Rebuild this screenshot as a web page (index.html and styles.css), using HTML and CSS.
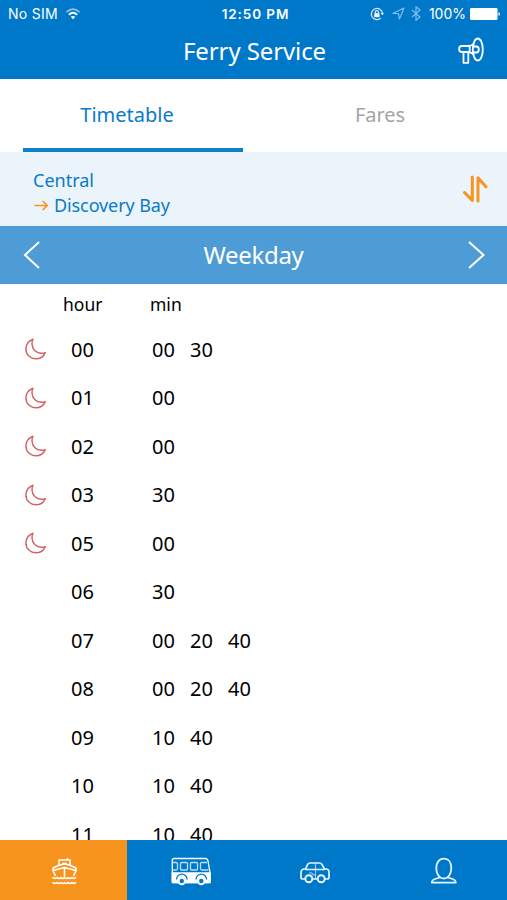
FILE: index.html
```html
<!DOCTYPE html>
<html lang="en">
<head>
<meta charset="utf-8">
<title>Ferry Service</title>
<link rel="stylesheet" href="styles.css">
</head>
<body>
<svg width="0" height="0" class="defs">
  <symbol id="moon" viewBox="0 0 24 24"><path d="M9 2.200C4.500 3.800 1.900 7.400 1.900 12c0 5.600 4.500 9.800 10 9.800 4.300 0 7.800-2.500 9.400-6.200-1.300.5-2.200.6-3.500.6C12 16.200 8 12 8 6.800c0-1.700.3-3.200 1-4.600Z" fill="none" stroke="#d4646a" stroke-width="1.500" stroke-linejoin="round"/></symbol>
</svg>
<div class="app">
  <header class="top">
    <div class="status">
      <div class="status-left"><span class="sim">No SIM</span>
        <svg width="16" height="12" viewBox="0 0 16 12" fill="none" stroke="#fff"><path d="M1.500 4.200Q8-1.800 14.500 4.200" stroke-width="1.700" opacity=".55"/><path d="M3.900 6.700Q8 3 12.100 6.700" stroke-width="1.900"/><path d="M8 11.200 5.700 8.800Q8 7 10.300 8.800Z" fill="#fff" stroke="none"/></svg>
      </div>
      <div class="clock">12:50 PM</div>
      <div class="status-right">
        <svg width="14" height="14" viewBox="0 0 14 14" fill="none" stroke="#d8edfa" stroke-width="1.200"><path d="M10.800 11.100A5.600 5.600 0 1 1 12.500 6.200"/><path d="m10.600 6 1.900 2.200L14 6Z" fill="#d8edfa" stroke="none"/><rect x="4.300" y="6.200" width="5.200" height="4" fill="#fff" stroke="none"/><path d="M5.300 6.500V5.300a1.600 1.600 0 0 1 3.200 0v1.200"/></svg>
        <svg class="loc" width="13" height="13" viewBox="0 0 13 13" fill="none" stroke="#7dbce8" stroke-width="1.200" stroke-linejoin="round"><path d="M1 6.300 12 1 7.400 12 6.500 6.600Z"/></svg>
        <svg class="bt" width="10" height="15" viewBox="0 0 10 15" fill="none" stroke="#7dbce8" stroke-width="1.200"><path d="m1 4 8 7-4 3.300V.7L9 4l-8 7"/></svg>
        <span class="pct">100%</span>
        <svg width="31" height="12" viewBox="0 0 31 12" fill="#fff"><rect x="0" y="0" width="27.500" height="12" rx="1.300"/><path d="M28.500 4q1.500.4 1.500 2t-1.500 2Z"/></svg>
      </div>
    </div>
    <div class="titlebar">
      <span></span>
      <h1>Ferry Service</h1>
      <svg class="horn" width="28" height="28" viewBox="0 0 28 28" fill="none" stroke="#fff" stroke-width="1.800" stroke-linejoin="round"><ellipse cx="20.800" cy="12.500" rx="5" ry="11"/><path d="M17 6.500C15.500 8.300 13.500 9 10.500 9H4.800C1.200 9 1.200 15 4.800 15h5.700c3 0 5.200 1 6.500 3.200M12.700 9.200V15M6.500 15v10.800h4.800V15M16 9.500h3.400c3.200 0 3.200 6 0 6H16"/></svg>
    </div>
  </header>
  <nav class="tabs">
    <div class="tab active"><span>Timetable</span></div>
    <div class="tab"><span>Fares</span></div>
  </nav>
  <section class="route">
    <div class="stops">
      <div class="from">Central</div>
      <div class="to"><svg width="16" height="12" viewBox="0 0 16 12" fill="none" stroke="#f7941e" stroke-width="1.700"><path d="M1.500 5.500h12.200M9.700 1 14.200 5.500l-4.500 4.500"/></svg><span>Discovery Bay</span></div>
    </div>
    <svg class="swap" width="26" height="28" viewBox="0 0 26 28" fill="none" stroke="#f7941e" stroke-width="3" stroke-linecap="round" stroke-linejoin="round"><path d="M10.300 2v23.500L2.500 17.500M16 26V2.800l8 9"/></svg>
  </section>
  <section class="day">
    <svg width="18" height="28" viewBox="0 0 18 28" fill="none" stroke="#fff" stroke-width="2"><path d="M17 1 3 14l14 13"/></svg>
    <h2>Weekday</h2>
    <svg width="18" height="28" viewBox="0 0 18 28" fill="none" stroke="#fff" stroke-width="2"><path d="m2 1 14.500 13L2 27"/></svg>
  </section>
  <main class="table">
    <div class="row head"><span></span><span class="w-hour">hour</span><span class="w-min">min</span></div>
    <div class="row"><svg class="moon"><use href="#moon"/></svg><b>00</b><div><i>00</i><i>30</i></div></div>
    <div class="row"><svg class="moon"><use href="#moon"/></svg><b>01</b><div><i>00</i></div></div>
    <div class="row"><svg class="moon"><use href="#moon"/></svg><b>02</b><div><i>00</i></div></div>
    <div class="row"><svg class="moon"><use href="#moon"/></svg><b>03</b><div><i>30</i></div></div>
    <div class="row"><svg class="moon"><use href="#moon"/></svg><b>05</b><div><i>00</i></div></div>
    <div class="row"><span></span><b>06</b><div><i>30</i></div></div>
    <div class="row"><span></span><b>07</b><div><i>00</i><i>20</i><i>40</i></div></div>
    <div class="row"><span></span><b>08</b><div><i>00</i><i>20</i><i>40</i></div></div>
    <div class="row"><span></span><b>09</b><div><i>10</i><i>40</i></div></div>
    <div class="row"><span></span><b>10</b><div><i>10</i><i>40</i></div></div>
    <div class="row"><span></span><b>11</b><div><i>10</i><i>40</i></div></div>
  </main>
  <footer class="bottom">
    <div class="item on"><svg width="26" height="30" viewBox="0 0 26 30" fill="none" stroke="#fff" stroke-width="1.600" stroke-linejoin="round"><path d="M8 8.500V3h11v5.500M16.500 3V1M11 6.500h5M4.500 19 2 13.500V11L8 8.300l5.500-1.300L19 8.300 25 11v2.500L22.500 19M2 13.500l11.500-3 11.500 3M13.500 10.500V20"/><path d="M1.500 20.200q2.200 2.200 4.500.3 1.900 2 3.800 0 1.900 2 3.700 0 1.900 2 3.700 0 1.900 2 3.800 0 2 1.900 4-.3M1.500 25.200q2.200 2.200 4.500.3 1.900 2 3.800 0 1.900 2 3.700 0 1.900 2 3.700 0 1.900 2 3.800 0 2 1.900 4-.3"/></svg></div>
    <div class="item"><svg width="40" height="30" viewBox="0 0 40 30" fill="none" stroke="#fff" stroke-width="1.300"><path d="M3 1.500h31.500q2 0 2.400 2L39 15.500v9q0 1-1 1H3q-1.700 0-1.700-1.700V3.200Q1.300 1.500 3 1.500Z"/><path d="M1.300 16H39v9.500H1.300Z" fill="#fff"/><g stroke="#b9defa"><path d="M1.500 5.500H5q1.500 0 1.500 1.500v4.500Q6.500 13 5 13H1.500"/><rect x="9.500" y="5.500" width="7" height="7.500" rx="1"/><rect x="19.500" y="5.500" width="7" height="7.500" rx="1"/><path d="M37.500 13H31q-1.500 0-1.500-1.500V6.500q0-1 1-1H36"/></g><path d="M5.500 22.500a5.300 5.300 0 0 1 10.600 0M25 22.500a5.300 5.300 0 0 1 10.600 0" stroke="#0078ca"/><circle cx="10.800" cy="24" r="3.200" fill="#0078ca" stroke-width="2"/><circle cx="30.300" cy="24" r="3.200" fill="#0078ca" stroke-width="2"/></svg></div>
    <div class="item car"><svg width="30" height="30" viewBox="0 0 30 30" fill="none" stroke="#e4f5ff" stroke-width="1.700" stroke-linejoin="round"><path d="M5 22H2.800Q1 22 1 20.300V15.500q0-3 3-3.500h1.500L7.800 7.200Q8.500 6 10 6h9.500q1.500 0 2.300 1.200L24.500 12h2q2.500.5 2.500 3v5q0 2-2 2H25M12.500 22h5M5.500 12.500h19.300"/><path d="M15.500 6v16M9 16h2.500l2 2h2" stroke-width="1.100" opacity=".7"/><circle cx="8.800" cy="21.800" r="3.500" stroke-width="2"/><circle cx="21.200" cy="21.800" r="3.500" stroke-width="2"/></svg></div>
    <div class="item"><svg width="28" height="30" viewBox="0 0 28 30" fill="none" stroke="#e4f5ff" stroke-width="1.800" stroke-linejoin="round"><path d="M10.300 20.500C7.300 18 6.300 14.500 6.300 11c0-5.400 2.700-9.300 7.500-9.300s7.500 3.900 7.500 9.300c0 3.500-1 7-4 9.500q-3.500 2-7 0Z"/><path d="M9.800 20.500 5 22q-3 1-3.200 3.600h24Q25.600 23 22.600 22l-4.800-1.500"/></svg></div>
  </footer>
</div>
</body>
</html>
```
FILE: styles.css
```css
* { box-sizing: border-box; }
body { margin: 0; background: #fff; font-family: "Noto Sans", "Open Sans", sans-serif; }
svg { display: block; flex: none; }
.defs { position: absolute; }
.app { width: 507px; height: 900px; display: flex; flex-direction: column; overflow: hidden; }
.top { height: 79px; background: #0078ca; color: #fff; flex: none; }
.status { height: 27px; display: grid; grid-template-columns: 1fr auto 1fr; align-items: center; padding: 0 6px 0 8px; font-family: Inter, "Liberation Sans", sans-serif; font-size: 14px; }
.status-left, .status-right { display: flex; align-items: center; }
.status-left { gap: 7px; }
.status-right { justify-content: flex-end; }
.loc { margin-left: 8px; }
.bt { margin: 0 8px 0 6px; }
.pct { margin-right: 4px; }
.sim { letter-spacing: .3px; }
.clock { font-weight: 600; font-size: 13.500px; letter-spacing: .9px; padding-left: 2px; }
.titlebar { height: 48px; display: grid; grid-template-columns: 1fr auto 1fr; align-items: center; padding: 0 22px 0 24px; }
h1, h2 { margin: 0; font-weight: 400; }
h1 { font-size: 24px; line-height: 48px; letter-spacing: -.1px; }
.horn { justify-self: end; }
.tabs { height: 73px; display: grid; grid-template-columns: 220px 1fr; padding: 0 23px; flex: none; font-size: 20px; color: #a4a4a4; }
.tab { display: flex; justify-content: center; padding-top: 22px; line-height: 28px; }
.tab + .tab { padding-left: 33px; letter-spacing: -.1px; }
.active { color: #0a7bc6; border-bottom: 4px solid #0e80ca; }
.active span { padding-right: 12px; }
.route { height: 74px; background: #ebf4fb; display: flex; justify-content: space-between; padding: 16px 19px 0 33px; flex: none; color: #0a7bc6; font-size: 18px; line-height: 25px; }
.to { display: flex; align-items: center; gap: 5px; letter-spacing: -.1px; }
.swap { margin-top: 7px; }
.day { height: 58px; background: #4e9cd5; display: flex; align-items: center; justify-content: space-between; padding: 0 22px; color: #fff; flex: none; }
h2 { font-size: 24px; letter-spacing: -.3px; line-height: 58px; }
.table { flex: 1; min-height: 0; overflow: hidden; color: #000; }
.row { height: 48.500px; display: grid; grid-template-columns: 47px 81px 1fr; align-items: center; padding-left: 24px; font-size: 20px; }
.row b, .row i { font-weight: 400; font-style: normal; }
.row div { display: flex; }
.row i { width: 38px; }
.moon { width: 24px; height: 24px; }
.head { height: 40.750px; font-size: 17.500px; }
.w-hour { margin-left: -8px; }
.w-min { margin-left: -2px; }
.bottom { height: 60px; display: grid; grid-template-columns: 127px 127px 127px 1fr; background: #0078ca; flex: none; }
.item { display: flex; align-items: center; justify-content: center; padding-top: 3px; }
.car { padding-right: 6px; }
.on { background: #f7941e; }
```
